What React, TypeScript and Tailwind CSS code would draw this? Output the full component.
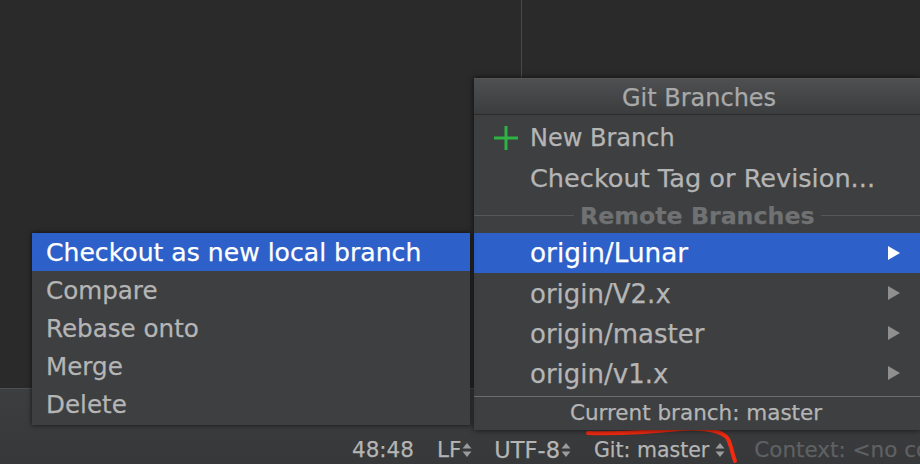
const branches = ["origin/V2.x", "origin/master", "origin/v1.x"];
const actions = ["Compare", "Rebase onto", "Merge", "Delete"];

function Updown({ className }: { className: string }) {
  return (
    <svg width="10" height="16" viewBox="0 0 10 16" className={className} fill="#9b9b9b">
      <path d="M5 1 L9.5 6.5 H0.5 Z" />
      <path d="M5 15 L9.5 9.5 H0.5 Z" />
    </svg>
  );
}

function Arrow({ active }: { active?: boolean }) {
  return (
    <svg width="12" height="14" viewBox="0 0 12 14" fill={active ? "#ffffff" : "#8f8f8f"}>
      <path d="M0 0 L12 7 L0 14 Z" />
    </svg>
  );
}

export default function App() {
  return (
    <div
      className="relative flex h-[464px] w-[920px] flex-col overflow-hidden bg-[#2a2a2a] text-[#b5b5b5] [-webkit-text-stroke:0.25px]"
      style={{ fontFamily: '"DejaVu Sans", sans-serif' }}
    >
      {/* Editor panes */}
      <div className="flex h-[388px] shrink-0">
        <div className="h-[78px] w-[522px] border-r border-[#4a4a4a]" />
      </div>

      {/* Status bar */}
      <div className="flex flex-1 items-end border-t border-[#4f4f4f] bg-gradient-to-b from-[#3c3e40] to-[#36383a] pb-[1px] text-[21.5px] leading-[26px]">
        <div className="ml-[352px] flex items-center whitespace-nowrap">
          <span className="w-[85px]">48:48</span>
          <span>LF</span>
          <Updown className="ml-[1px]" />
          <span className="ml-[22px] text-[22.5px]">UTF-8</span>
          <Updown className="ml-[1px]" />
          <span className="ml-[23px] text-[20.5px]">Git: master</span>
          <Updown className="ml-[6px]" />
          <span className="ml-[29px] text-[#5f6163]">Context: &lt;no context&gt;</span>
        </div>
      </div>

      {/* Red annotation */}
      <svg className="absolute left-[585px] top-[425px]" width="155" height="39" viewBox="0 0 155 39" fill="none">
        <path d="M3 8 C40 9 75 6 95 4 C120 2 138 6 143 14 C146 20 147 28 150 36" stroke="#f22a10" strokeWidth="4" strokeLinecap="round" />
      </svg>

      {/* Branch popup */}
      <div className="absolute left-[474px] top-[78px] w-[446px] border-t border-[#555] bg-[#3d3f41] shadow-[0_0_6px_rgba(0,0,0,0.7)]">
        <div className="flex h-[36px] items-center justify-center border-b border-[#2b2b2b] bg-gradient-to-b from-[#4d4f51] to-[#3b3d3f] pl-[4px] pt-[2px] text-[24px] text-[#a9a9a9]">
          Git Branches
        </div>
        <div className="mt-[3px] flex h-[40px] items-center pl-[20px] text-[24px]">
          <svg width="24" height="24" viewBox="0 0 24 24" fill="#2fb344">
            <path d="M10.5 0 H13.5 V10.5 H24 V13.5 H13.5 V24 H10.5 V13.5 H0 V10.5 H10.5 Z" />
          </svg>
          <span className="ml-[12px]">New Branch</span>
        </div>
        <div className="flex h-[40px] items-center pl-[56px] text-[25.6px]">Checkout Tag or Revision...</div>
        <div className="flex h-[35px] items-center text-[23.7px] font-bold text-[#707172]">
          <div className="h-px w-[100px] bg-[#555759]" />
          <span className="px-[6px] pt-[3px]">Remote Branches</span>
          <div className="h-px flex-1 bg-[#555759]" />
        </div>
        <div className="flex h-[40px] items-center justify-between bg-[#2d60c8] pl-[56px] pr-[20px] text-[26.3px] text-white">
          <span className="pt-[2px]">origin/Lunar</span>
          <Arrow active />
        </div>
        <div className="pb-[3px]">
          {branches.map((b) => (
            <div key={b} className="flex h-[40px] items-center justify-between pl-[56px] pr-[20px] text-[26px]">
              <span className="pt-[2px]">{b}</span>
              <Arrow />
            </div>
          ))}
        </div>
        <div className="flex h-[34px] items-center justify-center border-t border-[#6a6c6e] pr-[2px] text-[21.5px]">
          Current branch: master
        </div>
      </div>

      {/* Branch action menu */}
      <div className="absolute left-[32px] top-[233px] w-[438px] bg-[#3d3f41] pb-[2px] text-[24.6px] shadow-[0_0_5px_rgba(0,0,0,0.7)]">
        <div className="flex h-[38px] items-center bg-[#2d60c8] pl-[14px] pt-[2px] text-[25.1px] text-white">
          Checkout as new local branch
        </div>
        {actions.map((a) => (
          <div key={a} className="flex h-[38px] items-center pl-[14px] pt-[2px]">
            {a}
          </div>
        ))}
      </div>
    </div>
  );
}
